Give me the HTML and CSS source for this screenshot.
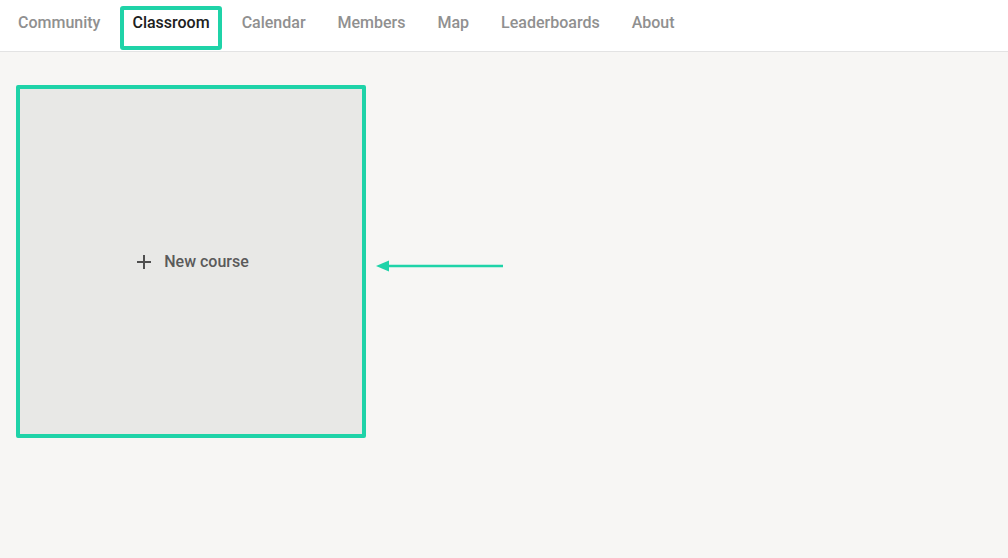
FILE: index.html
```html
<!DOCTYPE html>
<html lang="en">

<head>
    <meta charset="utf-8">
    <title>Classroom</title>
    <link rel="stylesheet" href="styles.css">
</head>

<body>
    <div class="topbar">
        <nav class="tabs">
            <a class="tab">Community</a>
            <a class="tab active">Classroom</a>
            <a class="tab">Calendar</a>
            <a class="tab">Members</a>
            <a class="tab">Map</a>
            <a class="tab">Leaderboards</a>
            <a class="tab">About</a>
        </nav>
    </div>
    <div class="content">
        <div class="new-course">
            <svg class="plus" width="14" height="14" viewBox="0 0 14 14">
                <path d="M7 0v14M0 7h14" stroke="#4f4f4f" stroke-width="2" />
            </svg>
            <span>New course</span>
        </div>
        <!-- 주석용 화살표 -->
        <svg class="pointer" width="128" height="12" viewBox="0 0 128 12">
            <path d="M11 6h116" stroke="#1fd3a8" stroke-width="2.4" />
            <path d="M0 6l13-5.5v11z" fill="#1fd3a8" />
        </svg>
    </div>
</body>

</html>
```
FILE: styles.css
```css
html, body {
    margin: 0;
    height: 100%;
}

body {
    background: #f7f6f4;
    font-family: Roboto, "Liberation Sans", sans-serif;
}

.topbar {
    background: #fff;
    height: 51px;
    border-bottom: 1px solid #e3e3e3;
}

.tabs {
    display: flex;
    gap: 8px;
    padding: 6px 0 0 6px;
}

.tab {
    box-sizing: border-box;
    height: 44px;
    padding: 3px 8px 0;
    border: 4px solid transparent;
    border-radius: 3px;
    font-size: 16px;
    font-weight: 500;
    line-height: 20px;
    color: #909090;
    cursor: pointer;
}

.tab.active {
    color: #202020;
    border-color: #1fd3a8;
}

.content {
    display: flex;
    align-items: flex-start;
    padding: 33px 16px;
}

.new-course {
    box-sizing: border-box;
    width: 350px;
    height: 353px;
    padding-left: 4px;
    background: #e8e8e6;
    border: 4px solid #1fd3a8;
    border-radius: 2px;
    display: flex;
    justify-content: center;
    align-items: center;
    gap: 13px;
    font-size: 16px;
    font-weight: 500;
    color: #5a5a5a;
    cursor: pointer;
}

.pointer {
    margin-top: 175px;
    margin-left: 10px;
}
```
